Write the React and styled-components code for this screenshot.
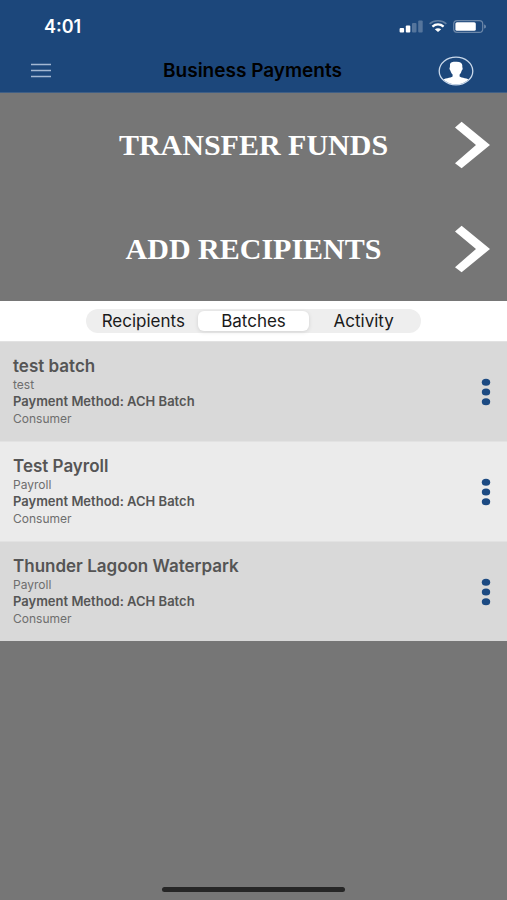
import React, {useState} from 'react';
import styled, {createGlobalStyle, css} from 'styled-components';

const GlobalStyle = createGlobalStyle`
    *{
        box-sizing: border-box;
    }

    body{
        margin: 0;
        background: #767676;
        font-family: Inter, "Liberation Sans", sans-serif;
    }

    button{
        font: inherit;
        color: inherit;
        border: none;
        background: none;
        padding: 0;
        cursor: pointer;
    }

    svg{
        display: block;
    }
`;

const Screen = styled.div`
    display: flex;
    flex-direction: column;
    min-height: 100vh;
`;

const Header = styled.header`
    background: #1c477b;
    border-bottom: 1px solid #3f5f86;
`;

const StatusBar = styled.div`
    display: flex;
    justify-content: space-between;
    align-items: center;
    height: 52px;
    padding: 0 20px 0 44px;
    color: #fff;
    font-size: 18px;
    font-weight: 600;
`;

const StatusIcons = styled.div`
    display: flex;
    align-items: center;
    gap: 6px;
`;

const NavBar = styled.nav`
    display: grid;
    grid-template-columns: 36px 1fr 36px;
    align-items: center;
    height: 40px;
    padding: 0 33px 2px 31px;
`;

const NavBtn = styled.button`
    display: flex;
    align-items: center;
    height: 36px;
`;

const Title = styled.h1`
    margin: 0;
    text-align: center;
    color: #000;
    font-size: 19px;
    line-height: 24px;
    font-weight: 600;
`;

const ActionBtn = styled.button`
    display: grid;
    grid-template-columns: 36px 1fr 36px;
    align-items: center;
    width: 100%;
    height: 104px;
    padding: 0 16px;
    color: #fff;
    font-family: "Liberation Serif", serif;
    font-size: 30px;
    line-height: 36px;
    font-weight: 700;

    span{
        grid-column: 2;
    }
`;

const TabBar = styled.div`
    display: flex;
    justify-content: center;
    align-items: center;
    height: 40px;
    background: #fff;
`;

const Tabs = styled.div`
    display: grid;
    grid-template-columns: repeat(3, 1fr);
    width: 66%;
    height: 24px;
    padding: 2px;
    border-radius: 12px;
    background: #eee;
`;

const Tab = styled.button`
    color: #1a1a1a;
    font-size: 17px;
    line-height: 20px;
    border-radius: 6px;

    ${({$active}) => $active && css`
        background: #fff;
        box-shadow: 0 1px 4px rgba(0, 0, 0, .12);
    `}
`;

const BatchList = styled.ul`
    margin: 0;
    padding: 0;
    list-style: none;
`;

const BatchRow = styled.li`
    display: flex;
    justify-content: space-between;
    align-items: center;
    padding: 14px 8px 14px 13px;
    border-top: 1px solid #e2e2e2;
    background: #d9d9d9;
    color: #555;

    &:nth-child(even){
        background: #ebebeb;
    }
`;

const BatchName = styled.h2`
    margin: 0;
    font-size: 17px;
    line-height: 20px;
    font-weight: 600;
`;

const BatchText = styled.p`
    margin: 0;
    color: ${({$strong}) => ($strong ? '#555' : '#6e6e6e')};
    font-size: ${({$strong}) => ($strong ? '13px' : '12px')};
    line-height: 17px;
    font-weight: ${({$strong}) => ($strong ? 600 : 400)};
`;

const MenuBtn = styled.button`
    display: flex;
    justify-content: center;
    align-items: center;
    width: 26px;
    height: 44px;
`;

const Footer = styled.footer`
    display: flex;
    justify-content: center;
    margin-top: auto;
    padding-bottom: 8px;
`;

const HomeIndicator = styled.div`
    width: 36%;
    height: 5px;
    border-radius: 3px;
    background: #262626;
`;

const batches = [
    {name: 'test batch', description: 'test', method: 'ACH Batch', type: 'Consumer'},
    {name: 'Test Payroll', description: 'Payroll', method: 'ACH Batch', type: 'Consumer'},
    {name: 'Thunder Lagoon Waterpark', description: 'Payroll', method: 'ACH Batch', type: 'Consumer'},
];

const tabs = ['Recipients', 'Batches', 'Activity'];

const Signal = () => (
    <svg width="24" height="13" viewBox="0 0 24 13" fill="#fff" aria-hidden="true">
        <rect x="0.6" y="8" width="4.5" height="4.5" rx="1" />
        <rect x="6.8" y="5.5" width="4.5" height="7" rx="1" />
        <rect x="13" y="3" width="4.5" height="9.5" rx="1" opacity=".25" />
        <rect x="19.2" y="0.5" width="4.5" height="12" rx="1" opacity=".25" />
    </svg>
);

const Wifi = () => (
    <svg width="18" height="12" viewBox="0 0 18 12" fill="none" aria-hidden="true">
        <path d="M.6 3.8C5.4-.2 12.6-.2 17.4 3.8" stroke="#fff" strokeWidth="1.6" opacity=".3" />
        <path d="M3.4 6.6C6.7 3.8 11.3 3.8 14.6 6.6" stroke="#fff" strokeWidth="2.3" />
        <path d="M5.8 9.2C7.6 7.8 10.4 7.8 12.2 9.2L9 12Z" fill="#fff" />
    </svg>
);

const Battery = () => (
    <svg width="34" height="13" viewBox="0 0 34 13" aria-hidden="true">
        <rect x=".7" y=".7" width="29" height="11.6" rx="3.4" fill="none" stroke="#fff" strokeWidth="1.2" opacity=".35" />
        <rect x="2.4" y="2.2" width="20.4" height="8.6" rx="1.6" fill="#fff" />
        <path d="M31.2 4.4C33.4 5 33.4 8 31.2 8.6Z" fill="#fff" opacity=".4" />
    </svg>
);

const Hamburger = () => (
    <svg width="20" height="16" viewBox="0 0 20 16" stroke="#a3b8d3" strokeWidth="1.5" aria-hidden="true">
        <path d="M0 1.5H20M0 7.5H20M0 13.5H20" />
    </svg>
);

const Profile = () => (
    <svg width="36" height="30" viewBox="0 0 36 30" aria-hidden="true">
        <clipPath id="profile-clip">
            <ellipse cx="18" cy="15" rx="16" ry="13.4" />
        </clipPath>
        <path
            clipPath="url(#profile-clip)"
            fill="#fff"
            d="M12 8.2C12.3 6.4 14.5 5.8 18 5.8C22.6 5.6 25 7.4 24.2 11.2C25 11.4 24.7 14 23.6 14.8C23.2 16.6 22.6 17.6 21.6 18.5V20.6C23.5 22.2 30 22.2 32 24.4V30H4V24.4C6 22.2 12.7 22.2 14.6 20.6V18.5C13.5 17.6 12.9 16.4 12.5 14.8C11.4 14 11.2 11.6 11.9 11.2Z"
        />
        <ellipse cx="18" cy="15" rx="16.8" ry="13.9" fill="none" stroke="#c9d8ea" strokeWidth="1.3" />
    </svg>
);

const Chevron = () => (
    <svg width="36" height="48" viewBox="0 0 36 48" fill="#fff" aria-hidden="true">
        <path d="M6.6 .8L35 24L6.6 47.2L0 42.2L21 24L0 6.4Z" />
    </svg>
);

const Dots = () => (
    <svg width="10" height="28" viewBox="0 0 10 28" fill="#1c4a82" aria-hidden="true">
        <ellipse cx="5" cy="4.2" rx="4.2" ry="3.5" />
        <ellipse cx="5" cy="14" rx="4.2" ry="3.5" />
        <ellipse cx="5" cy="23.8" rx="4.2" ry="3.5" />
    </svg>
);

const App = () => {
    const [active, setActive] = useState('Batches');

    return (
        <>
            <GlobalStyle />
            <Screen>
                <Header>
                    <StatusBar>
                        <span>4:01</span>
                        <StatusIcons>
                            <Signal />
                            <Wifi />
                            <Battery />
                        </StatusIcons>
                    </StatusBar>
                    <NavBar>
                        <NavBtn aria-label="Menu">
                            <Hamburger />
                        </NavBtn>
                        <Title>Business Payments</Title>
                        <NavBtn aria-label="Profile">
                            <Profile />
                        </NavBtn>
                    </NavBar>
                </Header>

                <main>
                    <ActionBtn>
                        <span>TRANSFER FUNDS</span>
                        <Chevron />
                    </ActionBtn>
                    <ActionBtn>
                        <span>ADD RECIPIENTS</span>
                        <Chevron />
                    </ActionBtn>

                    <TabBar>
                        <Tabs role="tablist">
                            {tabs.map((tab) => (
                                <Tab
                                    key={tab}
                                    role="tab"
                                    aria-selected={tab === active}
                                    $active={tab === active}
                                    onClick={() => setActive(tab)}
                                >
                                    {tab}
                                </Tab>
                            ))}
                        </Tabs>
                    </TabBar>

                    <BatchList>
                        {batches.map((batch) => (
                            <BatchRow key={batch.name}>
                                <div>
                                    <BatchName>{batch.name}</BatchName>
                                    <BatchText>{batch.description}</BatchText>
                                    <BatchText $strong>Payment Method: {batch.method}</BatchText>
                                    <BatchText>{batch.type}</BatchText>
                                </div>
                                <MenuBtn aria-label={`Options for ${batch.name}`}>
                                    <Dots />
                                </MenuBtn>
                            </BatchRow>
                        ))}
                    </BatchList>
                </main>

                <Footer>
                    <HomeIndicator />
                </Footer>
            </Screen>
        </>
    );
};

export default App;
